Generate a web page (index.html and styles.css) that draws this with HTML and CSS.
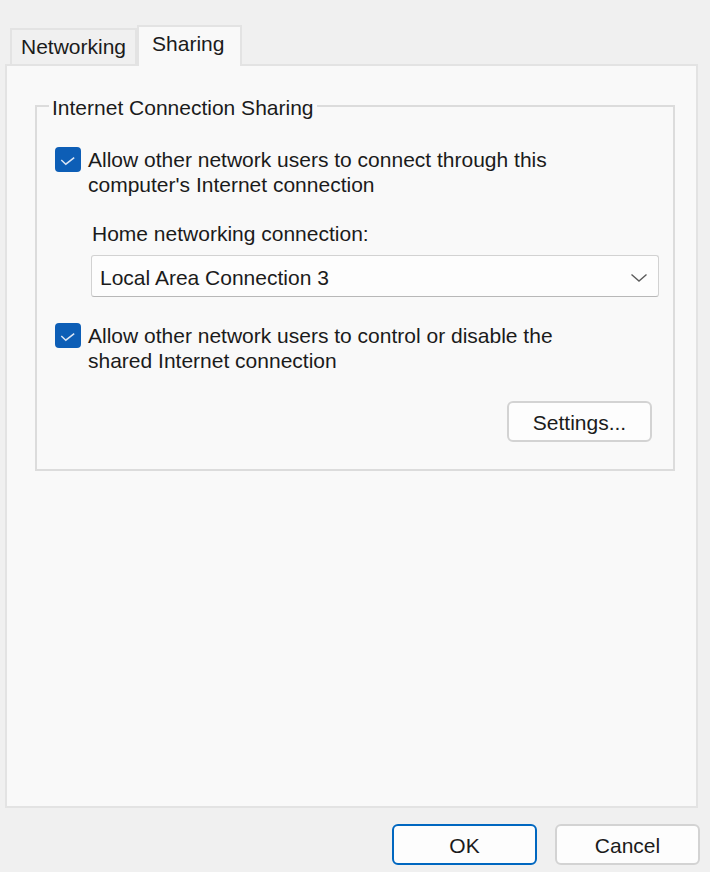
FILE: index.html
```html
<!DOCTYPE html>
<html lang="en">
<head>
  <meta charset="UTF-8">
  <title>Sharing Properties</title>
  <link rel="stylesheet" href="styles.css">
</head>
<body>
  <div class="tabs">
    <div class="tab">Networking</div>
    <div class="tab active">Sharing</div>
  </div>

  <div class="panel">
    <fieldset class="group">
      <legend>Internet Connection Sharing</legend>

      <label class="check">
        <span class="box">
          <svg width="26" height="25" viewBox="0 0 26 25"><path d="M6.3 13 L10.8 17.2 L19.2 10.6" fill="none" stroke="#dbe5f4" stroke-width="1.5"/></svg>
        </span>
        <span class="check-text">Allow other network users to connect through this<br>computer's Internet connection</span>
      </label>

      <div class="indent">
        <p class="field-label">Home networking connection:</p>
        <div class="select">
          <span>Local Area Connection 3</span>
          <svg width="18" height="10" viewBox="0 0 18 10"><path d="M1.5 1.5 L9 8 L16.5 1.5" fill="none" stroke="#5c5c5c" stroke-width="1.4"/></svg>
        </div>
      </div>

      <label class="check second">
        <span class="box">
          <svg width="26" height="25" viewBox="0 0 26 25"><path d="M6.3 13 L10.8 17.2 L19.2 10.6" fill="none" stroke="#dbe5f4" stroke-width="1.5"/></svg>
        </span>
        <span class="check-text">Allow other network users to control or disable the<br>shared Internet connection</span>
      </label>

      <div class="actions">
        <button class="btn settings">Settings...</button>
      </div>
    </fieldset>
  </div>

  <div class="footer">
    <button class="btn primary">OK</button>
    <button class="btn">Cancel</button>
  </div>
</body>
</html>
```

FILE: styles.css
```css
body {
  margin: 0;
  padding: 25px 0 0 0;
  background: #f0f0f0;
  color: #1b1b1b;
  font-family: 'Liberation Sans', Arial, sans-serif;
  font-size: 21px;
}
.tabs {
  display: flex;
  align-items: flex-end;
  margin-left: 10px;
}
.tab {
  border: 2px solid #e3e3e3;
  border-bottom: none;
  background: #f0f0f0;
  line-height: 34px;
  padding: 0 9px 0 9px;
}
.tab.active {
  position: relative;
  z-index: 1;
  background: #f9f9f9;
  line-height: 33px;
  padding: 0 16px 6px 13px;
  margin-bottom: -2px;
}
.panel {
  margin: 0 12px 0 5px;
  height: 740px;
  background: #f9f9f9;
  border: 2px solid #e3e3e3;
}
.group {
  margin: 25px 21px 0 28px;
  padding: 0 14px 27px 18px;
  border: 2px solid #dcdcdc;
}
.group legend {
  margin-left: -6px;
  padding: 4px 3px 0;
  line-height: 25px;
}
.check {
  display: flex;
  align-items: flex-start;
  gap: 7px;
  margin-top: 27px;
  line-height: 25px;
}
.check.second {
  margin-top: 26px;
}
.box {
  flex: none;
  width: 26px;
  height: 25px;
  border-radius: 4px;
  background: #0d5eb6;
}
.box svg {
  display: block;
}
.indent {
  margin-left: 36px;
}
.field-label {
  margin: 24px 0 0 1px;
  line-height: 25px;
}
.select {
  display: flex;
  align-items: center;
  justify-content: space-between;
  margin-top: 9px;
  height: 37px;
  padding: 3px 10px 0 8px;
  background: #fdfdfd;
  border: 1px solid #d2d2d2;
  border-bottom-color: #b8b8b8;
  border-radius: 3px;
  line-height: 37px;
}
.actions {
  display: flex;
  justify-content: flex-end;
  margin-top: 28px;
  padding-right: 7px;
}
.btn {
  font: inherit;
  color: inherit;
  width: 145px;
  height: 41px;
  padding: 3px 0 0;
  background: #fdfdfd;
  border: 2px solid #d3d3d3;
  border-radius: 6px;
  line-height: 34px;
}
.btn.primary {
  border-color: #0067c0;
}
.footer {
  display: flex;
  justify-content: flex-end;
  gap: 18px;
  padding: 16px 10px 0 0;
}
```
